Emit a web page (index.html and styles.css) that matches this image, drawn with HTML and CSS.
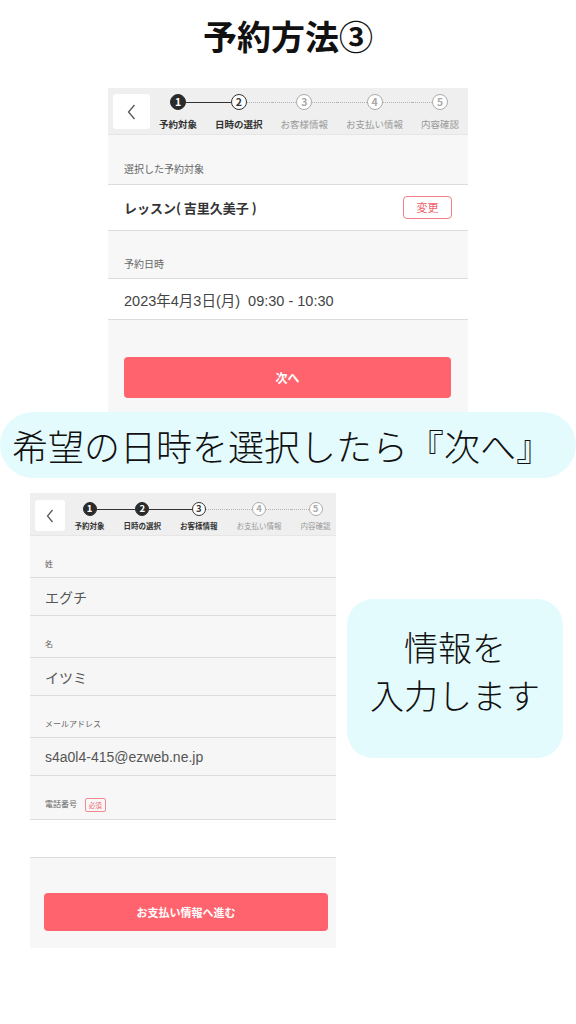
FILE: index.html
```html
<!DOCTYPE html>
<html lang="ja">
<head>
    <meta charset="UTF-8">
    <meta name="viewport" content="width=device-width, initial-scale=1.0">
    <title>予約方法③</title>
    <link rel="stylesheet" href="styles.css">
</head>
<body>
    <h1 class="page-title">予約方法③</h1>

    <!-- 1枚目: 日時の選択 -->
    <div class="shot shot-top">
        <div class="shot-header">
            <div class="back-btn">
                <svg width="9" height="16" viewBox="0 0 9 16"><path d="M7.5 1 L1.5 8 L7.5 15" fill="none" stroke="#555" stroke-width="1.3"/></svg>
            </div>
            <ol class="steps">
                <li class="step done">
                    <div class="step-top"><i class="line none"></i><span class="dot">1</span><i class="line on"></i></div>
                    <span class="step-label">予約対象</span>
                </li>
                <li class="step current">
                    <div class="step-top"><i class="line on"></i><span class="dot">2</span><i class="line"></i></div>
                    <span class="step-label">日時の選択</span>
                </li>
                <li class="step">
                    <div class="step-top"><i class="line"></i><span class="dot">3</span><i class="line"></i></div>
                    <span class="step-label">お客様情報</span>
                </li>
                <li class="step">
                    <div class="step-top"><i class="line"></i><span class="dot">4</span><i class="line"></i></div>
                    <span class="step-label">お支払い情報</span>
                </li>
                <li class="step">
                    <div class="step-top"><i class="line"></i><span class="dot">5</span><i class="line none"></i></div>
                    <span class="step-label">内容確認</span>
                </li>
            </ol>
        </div>

        <div class="field-label first">選択した予約対象</div>
        <div class="row row-lesson">
            <span class="lesson-name">レッスン( 吉里久美子 )</span>
            <span class="change-btn">変更</span>
        </div>

        <div class="field-label">予約日時</div>
        <div class="row row-date">2023年4月3日(月)&nbsp;&nbsp;09:30 - 10:30</div>

        <div class="main-btn">次へ</div>
    </div>

    <div class="banner">希望の日時を選択したら『次へ』</div>

    <div class="lower">
        <!-- 2枚目: お客様情報 -->
        <div class="shot shot-form">
            <div class="shot-header">
                <div class="back-btn">
                    <svg width="8" height="14" viewBox="0 0 8 14"><path d="M6.5 1 L1.5 7 L6.5 13" fill="none" stroke="#555" stroke-width="1.2"/></svg>
                </div>
                <ol class="steps">
                    <li class="step done">
                        <div class="step-top"><i class="line none"></i><span class="dot">1</span><i class="line on"></i></div>
                        <span class="step-label">予約対象</span>
                    </li>
                    <li class="step done">
                        <div class="step-top"><i class="line on"></i><span class="dot">2</span><i class="line on"></i></div>
                        <span class="step-label">日時の選択</span>
                    </li>
                    <li class="step current">
                        <div class="step-top"><i class="line on"></i><span class="dot">3</span><i class="line"></i></div>
                        <span class="step-label">お客様情報</span>
                    </li>
                    <li class="step">
                        <div class="step-top"><i class="line"></i><span class="dot">4</span><i class="line"></i></div>
                        <span class="step-label">お支払い情報</span>
                    </li>
                    <li class="step">
                        <div class="step-top"><i class="line"></i><span class="dot">5</span><i class="line none"></i></div>
                        <span class="step-label">内容確認</span>
                    </li>
                </ol>
            </div>

            <div class="field-label">姓</div>
            <div class="row">エグチ</div>

            <div class="field-label">名</div>
            <div class="row">イツミ</div>

            <div class="field-label">メールアドレス</div>
            <div class="row">s4a0l4-415@ezweb.ne.jp</div>

            <div class="field-label">電話番号 <span class="required">必須</span></div>
            <div class="row row-empty"></div>

            <div class="main-btn">お支払い情報へ進む</div>
        </div>

        <div class="bubble">情報を<br>入力します</div>
    </div>
</body>
</html>
```

FILE: styles.css
```css
/* General */
body {
    margin: 0;
    background: #fff;
    font-family: "Noto Sans CJK JP", "Noto Sans", sans-serif;
    color: #333;
}

.page-title {
    margin: 0;
    height: 88px;
    padding-top: 14px;
    box-sizing: border-box;
    font-size: 34px;
    line-height: 44px;
    font-weight: 700;
    text-align: center;
    color: #111;
}

/* Screenshot frames */
.shot {
    background: #f7f7f7;
    overflow: hidden;
}

.shot-top {
    width: 360px;
    margin-left: 108px;
    padding-bottom: 14px;
}

.shot-header {
    display: flex;
    background: #efefef;
    border-bottom: 1px solid #e6e6e6;
    box-sizing: border-box;
}

.back-btn {
    display: flex;
    flex-shrink: 0;
    align-items: center;
    justify-content: center;
    background: #fff;
    border-radius: 3px;
}

/* Stepper */
.steps {
    display: flex;
    flex-shrink: 0;
    list-style: none;
    margin: 0;
    padding: 0;
}

.step {
    display: flex;
    flex-direction: column;
}

.step-top {
    display: flex;
    align-items: center;
}

.line {
    flex: 1;
    height: 0;
    border-top: 1.5px dotted #b5b5b5;
}

.line.on {
    border-top: 1.5px solid #333;
}

.line.none {
    border-top-color: transparent;
}

.dot {
    box-sizing: border-box;
    border-radius: 50%;
    border: 1.5px solid #aaa;
    color: #aaa;
    font-weight: 700;
    text-align: center;
    background: #fff;
}

.step.done .dot {
    background: #2b2b2b;
    border-color: #2b2b2b;
    color: #fff;
}

.step.current .dot {
    border-color: #333;
    color: #333;
}

.step-label {
    white-space: nowrap;
    color: #999;
}

.step.done .step-label,
.step.current .step-label {
    color: #333;
    font-weight: 700;
}

/* top screenshot sizes */
.shot-top .shot-header {
    height: 47px;
    padding: 6px 0 0 5px;
}

.shot-top .back-btn {
    width: 37px;
    height: 35px;
}

.shot-top .step-top {
    height: 16px;
}

.shot-top .dot {
    width: 16px;
    height: 16px;
    font-size: 10.5px;
    line-height: 13px;
}

.shot-top .step-label {
    margin-top: 8px;
    padding: 0 9px;
    font-size: 9.5px;
    line-height: 13px;
}

/* Fields */
.field-label {
    padding: 26px 16px 7px;
    font-size: 10px;
    line-height: 14px;
    color: #666;
}

.field-label.first {
    padding-top: 27px;
    padding-bottom: 8px;
}

.row {
    display: flex;
    align-items: center;
    background: #fff;
    border-top: 1px solid #dcdcdc;
    border-bottom: 1px solid #dcdcdc;
    padding: 0 16px;
}

.row-lesson {
    height: 45px;
    justify-content: space-between;
}

.lesson-name {
    font-size: 13px;
    font-weight: 700;
    color: #333;
}

.change-btn {
    width: 49px;
    height: 23px;
    box-sizing: border-box;
    border: 1px solid #f07f87;
    border-radius: 4px;
    color: #f0636d;
    font-size: 11px;
    line-height: 21px;
    text-align: center;
}

.row-date {
    height: 40px;
    font-family: "Liberation Sans", "Noto Sans CJK JP", sans-serif;
    font-size: 14.5px;
    color: #444;
}

.main-btn {
    background: #ff646e;
    color: #fff;
    font-weight: 700;
    text-align: center;
    border-radius: 4px;
}

.shot-top .main-btn {
    margin: 37px 17px 0 16px;
    height: 41px;
    line-height: 41px;
    font-size: 12px;
}

/* Banner */
.banner {
    height: 66px;
    padding-left: 12px;
    background: #e4fbfd;
    border-radius: 33px;
    font-size: 36px;
    font-weight: 300;
    line-height: 66px;
    color: #111;
    white-space: nowrap;
}

/* Lower area */
.lower {
    display: flex;
    align-items: flex-start;
    margin-top: 15px;
}

.shot-form {
    width: 306px;
    margin-left: 30px;
    padding-bottom: 17px;
}

.shot-form .shot-header {
    height: 43px;
    padding: 7px 0 0 5px;
}

.shot-form .back-btn {
    width: 30px;
    height: 31px;
}

.shot-form .steps {
    margin-top: 2px;
}

.shot-form .step-top {
    height: 14px;
}

.shot-form .dot {
    width: 14px;
    height: 14px;
    font-size: 9.5px;
    line-height: 11px;
}

.shot-form .step-label {
    margin-top: 3.5px;
    padding: 0 9.5px;
    font-size: 7.5px;
    line-height: 11px;
}

.shot-form .field-label {
    padding: 22px 15px 7px;
    font-size: 8px;
    line-height: 12px;
}

.shot-form .row {
    height: 37px;
    padding: 0 15px;
    background: #f6f6f6;
    font-family: "Liberation Sans", "Noto Sans CJK JP", sans-serif;
    font-size: 14px;
    color: #555;
}

.shot-form .row.row-empty {
    background: #fff;
}

.required {
    display: inline-block;
    margin-left: 6px;
    padding: 0 3px;
    border: 1px solid #f08a90;
    border-radius: 2px;
    color: #f0636d;
    font-size: 6.5px;
    line-height: 12px;
    vertical-align: middle;
}

.shot-form .main-btn {
    margin: 35px 8px 0 14px;
    height: 38px;
    line-height: 38px;
    font-size: 11px;
}

/* Speech bubble */
.bubble {
    width: 216px;
    height: 159px;
    margin: 106px 0 0 11px;
    padding-top: 24px;
    box-sizing: border-box;
    background: #e4fbfd;
    border-radius: 26px;
    font-size: 34px;
    font-weight: 300;
    line-height: 48px;
    text-align: center;
    color: #111;
}
```
